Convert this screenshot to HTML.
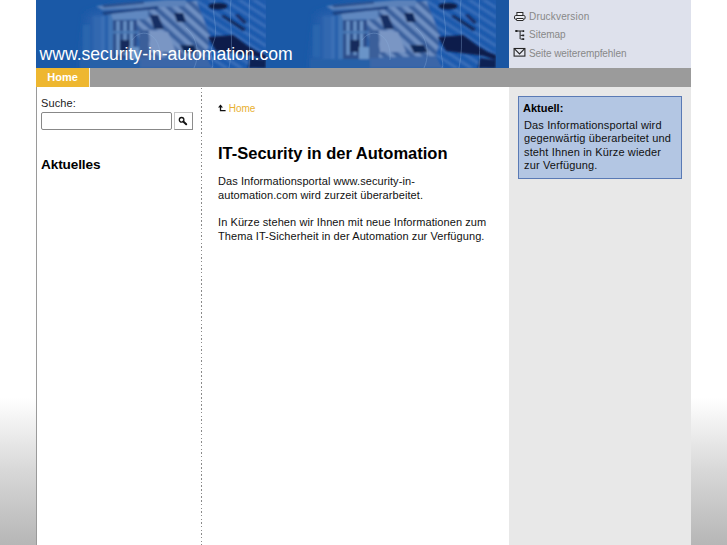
<!DOCTYPE html>
<html><head><meta charset="utf-8">
<style>
html,body{margin:0;padding:0;}
body{width:727px;height:545px;overflow:hidden;position:relative;font-family:"Liberation Sans",sans-serif;
background:linear-gradient(to bottom,#fff 0,#fff 398px,#d8d8d8 470px,#b6b6b6 545px);}
#page{position:absolute;left:36px;top:0;width:655px;height:545px;background:#fff;}
#lborder{position:absolute;left:0;top:87px;width:1px;height:458px;background:#9a9a9a;}
#header{position:absolute;left:0;top:0;width:473px;height:68px;background:#1a58a6;overflow:hidden;}
#hpanel{position:absolute;left:473px;top:0;width:182px;height:68px;background:#dee1ec;}
#nav{position:absolute;left:0;top:68px;width:655px;height:19px;background:#9b9b9b;}
#home{position:absolute;left:0;top:0;width:53px;height:19px;background:#eeb730;color:#fff;font-weight:bold;font-size:11px;line-height:19px;text-align:center;}
#sep{position:absolute;left:53px;top:0;width:1px;height:19px;background:#f4f0e0;}
#site{position:absolute;left:3.5px;top:44px;color:#fff;font-size:17.6px;white-space:nowrap;}
#rcol{position:absolute;left:473px;top:87px;width:182px;height:458px;background:#e8e8e8;}
#dots{position:absolute;left:165px;top:87px;width:1px;height:458px;background:repeating-linear-gradient(to bottom,#fff 0,#fff 1px,#8a8a8a 1px,#8a8a8a 2.5px,#fff 2.5px,#fff 3.68px);}
.t{position:absolute;white-space:nowrap;}
.p{position:absolute;white-space:nowrap;font-size:11px;line-height:13.6px;color:#111;letter-spacing:0.08px;}
</style></head><body>
<div id="page">
  <div id="header"><svg width="473" height="68" viewBox="0 0 473 68" style="position:absolute;left:0;top:0">
<defs>
<filter id="b1" x="-10%" y="-10%" width="120%" height="120%"><feGaussianBlur stdDeviation="1.2"/></filter>
<filter id="b2" x="-10%" y="-10%" width="120%" height="120%"><feGaussianBlur stdDeviation="3.5"/></filter>
<pattern id="st1" patternUnits="userSpaceOnUse" width="9" height="9" patternTransform="rotate(42)">
  <rect x="0" y="0" width="9" height="9" fill="#3a609e"/>
  <rect x="0" y="0" width="9" height="4.5" fill="#6f90c2"/>
</pattern>
<pattern id="st2" patternUnits="userSpaceOnUse" width="8" height="8" patternTransform="rotate(33)">
  <rect x="0" y="0" width="8" height="8" fill="#1d5aad"/>
  <rect x="0" y="0" width="8" height="2.5" fill="#3c72bb"/>
</pattern>
<clipPath id="tc"><rect x="0" y="0" width="230" height="68"/></clipPath>
<g id="tile">
 <g clip-path="url(#tc)">
  <rect x="0" y="0" width="230" height="68" fill="#1a59a7"/>
  <g filter="url(#b2)">
   <path d="M50 14 L80 4 L130 0 L230 0 L230 68 L44 68 Z" fill="#255fab"/>
  </g>
  <g filter="url(#b1)">
   <!-- faint columns -->
   <rect x="47" y="25" width="7" height="32" fill="#2b66ae"/>
   <rect x="57" y="16" width="12" height="43" fill="#3068b0"/>
   <rect x="65" y="16" width="4" height="43" fill="#3a70b6"/>
   <rect x="72" y="12" width="5" height="50" fill="#4074b6"/>
   <rect x="44" y="59" width="80" height="9" fill="#2860a8"/>
   <!-- striped right area -->
   <path d="M100 9 L126 3 L170 0 L176 40 L170 60 L104 58 Z" fill="url(#st1)"/>
   <path d="M160 0 L230 0 L230 68 L168 68 L174 36 Z" fill="url(#st2)"/>
   <!-- roof top -->
   <path d="M60 6 L130 0 L150 0 L150 6 L66 10 Z" fill="#5c82ba"/>
   <path d="M66 5 L108 1.5 L108 3.5 L68 7.5 Z" fill="#2a4f8c"/>
   <path d="M66 12 L100 8.5 L122 6 L122 9 L100 11.5 L68 15 Z" fill="#1e4282"/>
   <path d="M75 14 L100 11 L112 10 L112 19 L77 20 Z" fill="#6088c0"/>
   <!-- windows dark block -->
   <rect x="77" y="20" width="24" height="39" fill="#2d4f8c"/>
   <rect x="80.5" y="21" width="3" height="34" fill="#6c96ca"/>
   <rect x="87.5" y="21" width="3" height="34" fill="#6c96ca"/>
   <rect x="94" y="21" width="3" height="26" fill="#6c96ca"/>
   <rect x="77" y="31" width="24" height="2.5" fill="#4a78b4"/>
   <rect x="84" y="40" width="10" height="12" fill="#132c5c"/>
   <rect x="93" y="47" width="11" height="12" fill="#6a94c8"/>
   <rect x="103" y="30" width="10" height="30" fill="#3a5e9a"/>
   <!-- light textured patch -->
   <path d="M113 30 L132 32 L140 52 L114 52 Z" fill="#7a96c4"/>
   <!-- dark spots -->
   <path d="M114 15 L122 15 L128 29 L118 29 Z" fill="#142e64"/>
   <path d="M138 13 L147 13 L150 22 L141 22 Z" fill="#11285a"/>
   <path d="M144 45 L158 45 L162 52 L148 53 Z" fill="#0f2656"/>
   <path d="M104 58 L170 56 L176 68 L104 68 Z" fill="#3a66a8"/>
  </g>
  <g filter="url(#b1)">
   <!-- dark ellipse -->
   <ellipse cx="182" cy="6.2" rx="9.5" ry="3.3" fill="#0b1c44"/>
   <!-- streaks -->
   <path d="M185 16 L188 15 L210 29 L207 31 Z" fill="#0e2658"/>
   <path d="M199 15 L202 14 L211 22 L208 24 Z" fill="#122c62"/>
   <!-- big dark shape -->
   <path d="M172 37 L197 35 L212 46 L222 52 L230 55 L230 60 L218 56 L180 51 Z" fill="#0b1f4c"/>
   <path d="M214 58 L230 60 L230 68 L212 68 Z" fill="#0d2454"/>
  </g>
  <!-- thin light lines -->
  <g stroke="#8db0dc" stroke-width="0.7" fill="none" opacity="0.5">
   <path d="M179 0 C174 14 184 28 177 44 C172 54 179 62 176 68"/>
   <path d="M195 0 C192 18 199 40 193 68"/>
   <path d="M213.5 0 C212.5 20 214.5 45 213 68"/>
   <path d="M96 40 C106 26 126 34 124 60"/>
   <path d="M150 28 C162 38 164 55 158 68"/>
  </g>
 </g>
</g>
</defs>
<use href="#tile" x="0" y="0"/>
<use href="#tile" x="230" y="0"/>
<rect x="460" y="0" width="13" height="68" fill="#1a56a2"/>
</svg>

    <div id="site">www.security-in-automation.com</div>
  </div>
  <div id="hpanel">
    <svg style="position:absolute;left:0;top:0" width="60" height="68" viewBox="0 0 60 68">
      <g fill="none" stroke="#2a2a2a" stroke-width="1">
        <rect x="7.9" y="12.5" width="6" height="3" fill="#f4f4f8"/>
        <rect x="5.5" y="15.5" width="10.6" height="3.8" rx="1.3" fill="#e8eaf0"/>
        <rect x="7.9" y="18.5" width="6" height="2" fill="#ffffff"/>
      </g>
      <g fill="#222">
        <rect x="6.3" y="30" width="2.3" height="2"/>
        <rect x="8.4" y="30.5" width="5" height="1"/>
        <rect x="10.6" y="31" width="1" height="8"/>
        <rect x="13.4" y="30.2" width="1.8" height="1.8"/>
        <rect x="11.5" y="34.9" width="2.5" height="1"/>
        <rect x="13.4" y="34.5" width="1.8" height="1.8"/>
        <rect x="11.5" y="38.6" width="2.5" height="1"/>
        <rect x="13.4" y="38.2" width="1.8" height="1.8"/>
      </g>
      <g fill="none" stroke="#262626" stroke-width="1.1">
        <rect x="5.1" y="48.5" width="10.8" height="7.6" fill="#e4e6ee"/>
        <path d="M5.3 48.7 L10.5 54 L15.7 48.7"/>
      </g>
    </svg>
    <div class="t" style="left:20px;top:11px;font-size:10px;color:#888888;letter-spacing:0.17px;">Druckversion</div>
    <div class="t" style="left:20px;top:29px;font-size:10px;color:#888888;">Sitemap</div>
    <div class="t" style="left:20px;top:47.5px;font-size:10px;color:#888888;letter-spacing:-0.07px;">Seite weiterempfehlen</div>
  </div>
  <div id="nav"><div id="home">Home</div><div id="sep"></div></div>
  <div id="lborder"></div>
  <div id="dots"></div>
  <div id="rcol">
    <div style="position:absolute;left:9px;top:9px;width:162px;height:81px;border:1px solid #5a7ab5;background:#b3c6e3;"></div>
    <div class="t" style="left:14px;top:15px;font-size:11px;font-weight:bold;">Aktuell:</div>
    <div class="p" style="left:15px;top:31.5px;letter-spacing:0.14px;">Das Informationsportal wird<br>gegenwärtig überarbeitet und<br>steht Ihnen in Kürze wieder<br>zur Verfügung.</div>
  </div>
  <div class="t" style="left:5px;top:97px;font-size:11px;color:#222;letter-spacing:0.1px;">Suche:</div>
  <div style="position:absolute;left:5px;top:112px;width:129px;height:16px;border:1px solid #888;border-radius:2px;background:#fff;"></div>
  <div style="position:absolute;left:138px;top:112px;width:17px;height:16px;border:1px solid;border-color:#c4c4c4 #8c8c8c #8c8c8c #c4c4c4;background:#fff;"></div>
  <svg style="position:absolute;left:138px;top:112px" width="19" height="18" viewBox="0 0 19 18"><circle cx="7.6" cy="7.8" r="2.3" fill="none" stroke="#151515" stroke-width="1.3"/><path d="M9.3 9.5 L12.2 12.3" stroke="#151515" stroke-width="2" stroke-linecap="round"/></svg>
  <div class="t" style="left:5px;top:156.5px;font-size:13.6px;font-weight:bold;letter-spacing:-0.12px;">Aktuelles</div>
  <svg style="position:absolute;left:181px;top:104px" width="10" height="8" viewBox="0 0 10 8"><path d="M3.5 1.8 V6.6 H8.6" fill="none" stroke="#111" stroke-width="1.3"/><path d="M3.5 0.6 L1 3.4 H6 Z" fill="#111"/></svg>
  <div class="t" style="left:192.7px;top:102.5px;font-size:10px;color:#e8b030;">Home</div>
  <div class="t" style="left:182px;top:144px;font-size:16.5px;font-weight:bold;">IT-Security in der Automation</div>
  <div class="p" style="left:182px;top:175px;">Das Informationsportal www.security-in-<br>automation.com wird zurzeit überarbeitet.</div>
  <div class="p" style="left:182px;top:216px;">In Kürze stehen wir Ihnen mit neue Informationen zum<br>Thema IT-Sicherheit in der Automation zur Verfügung.</div>
</div>
</body></html>
